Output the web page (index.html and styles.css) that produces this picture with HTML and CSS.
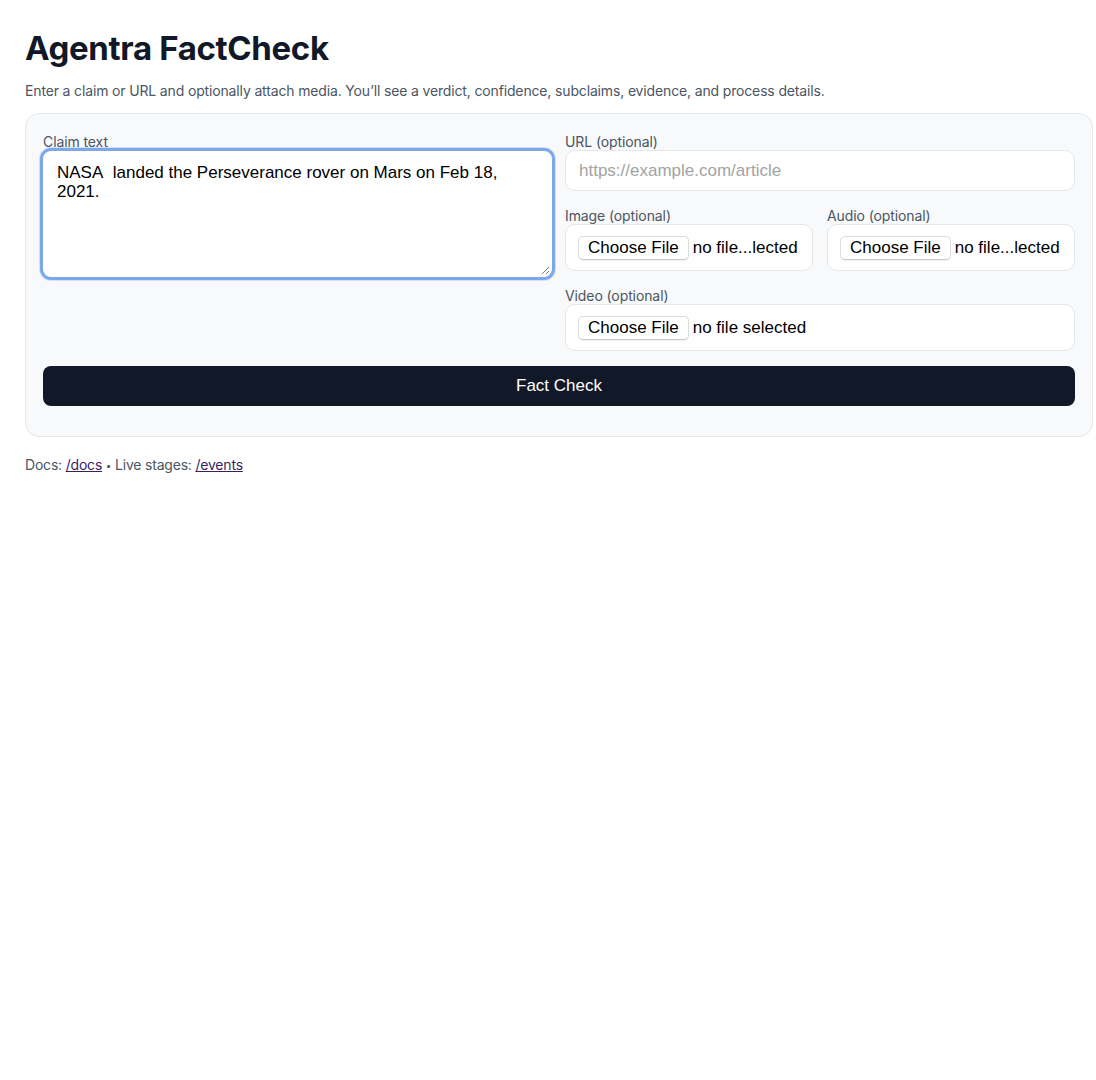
FILE: index.html
```html
<!DOCTYPE html>
<html lang="en">
<head>
<meta charset="utf-8">
<title>Agentra FactCheck</title>
<link rel="stylesheet" href="styles.css">
</head>
<body>
<main class="page">
  <h1 class="title">Agentra FactCheck</h1>
  <p class="subtitle">Enter a claim or URL and optionally attach media. You’ll see a verdict, confidence, subclaims, evidence, and process details.</p>
  <form class="card">
    <div class="grid">
      <div class="field">
        <label class="label">Claim text</label>
        <div class="textarea">NASA&nbsp; landed the Perseverance rover on Mars on Feb 18, 2021.<span class="resize"></span></div>
      </div>
      <div class="stack">
        <div class="field">
          <label class="label">URL (optional)</label>
          <div class="input placeholder">https://example.com/article</div>
        </div>
        <div class="row">
          <div class="field">
            <label class="label">Image (optional)</label>
            <div class="file"><span class="choose">Choose File</span><span class="fname">no file...lected</span></div>
          </div>
          <div class="field">
            <label class="label">Audio (optional)</label>
            <div class="file"><span class="choose">Choose File</span><span class="fname">no file...lected</span></div>
          </div>
        </div>
        <div class="field">
          <label class="label">Video (optional)</label>
          <div class="file"><span class="choose">Choose File</span><span class="fname">no file selected</span></div>
        </div>
      </div>
    </div>
    <button type="button" class="submit">Fact Check</button>
  </form>
  <p class="footer">Docs: <a href="#">/docs</a> <span class="dot">•</span> Live stages: <a href="#">/events</a></p>
</main>
</body>
</html>
```

FILE: styles.css
```css
* { box-sizing: border-box; }
html, body { margin: 0; padding: 0; background: #ffffff; }
body { font-family: Inter, "Noto Sans", sans-serif; color: #111827; }
.page { padding: 24px 3px 0 25px; }
.title { margin: 6px 0 0; font-size: 33px; font-weight: 700; letter-spacing: -0.35px; line-height: 36px; color: #111827; }
.subtitle { margin: 16px 0 0; font-size: 14px; line-height: 18px; letter-spacing: -0.15px; color: #4b5563; }
.card { margin-top: 13px; background: #f7f9fa; border: 1px solid #e5e7eb; border-radius: 14px; padding: 20px 17px 30px; }
.grid { display: grid; grid-template-columns: 1fr 1fr; column-gap: 12px; }
.field { display: flex; flex-direction: column; min-width: 0; }
.label { font-size: 14px; line-height: 16px; color: #4b5563; letter-spacing: -0.1px; }
.stack { display: flex; flex-direction: column; gap: 17px; }
.row { display: grid; grid-template-columns: 1fr 1fr; column-gap: 14px; }
.textarea { position: relative; margin: -2px -2px 0 -3px; height: 132px; background: #fff; border: 3px solid #7ea7ea; border-radius: 11px; padding: 12px 14px; font-family: "Liberation Sans", Arial, sans-serif; font-size: 17px; line-height: 19px; color: #000; box-shadow: 0 0 0 1px #d3e1f8; }
.resize { position: absolute; right: 3px; bottom: 3px; width: 7px; height: 7px; background: linear-gradient(135deg, transparent 45%, #777 45%, #777 55%, transparent 55%, transparent 75%, #777 75%, #777 85%, transparent 85%); }
.input { height: 41px; background: #fff; border: 1px solid #e5e7eb; border-radius: 10px; padding: 0 13px; display: flex; align-items: center; font-family: "Liberation Sans", Arial, sans-serif; font-size: 17px; }
.placeholder { color: #a3a3a3; }
.file { height: 47px; background: #fff; border: 1px solid #e5e7eb; border-radius: 10px; padding: 0 12px; display: flex; align-items: center; font-family: "Liberation Sans", Arial, sans-serif; font-size: 17px; color: #000; white-space: nowrap; overflow: hidden; }
.choose { display: inline-block; background: #fff; border: 1px solid #dcdcdc; border-bottom-color: #c8c8c8; border-radius: 5px; padding: 1px 9px 2px; line-height: 19px; box-shadow: 0 1px 1px rgba(0,0,0,0.06); margin-right: 4px; }
.submit { display: block; width: 100%; margin-top: 15px; height: 40px; border: 0; border-radius: 8px; background: #111827; color: #fff; font-family: "Liberation Sans", Arial, sans-serif; font-size: 17px; cursor: pointer; }
.footer { margin: 19px 0 0; font-size: 14px; line-height: 18px; letter-spacing: -0.2px; color: #4b5563; }
.footer .dot { font-size: 10px; vertical-align: 1px; }
.footer a { color: #3b1f63; text-decoration: underline; }
```
